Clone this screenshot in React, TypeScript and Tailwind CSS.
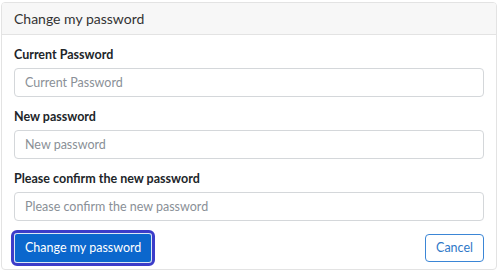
import { useState } from 'react'

function Field({
  id,
  label,
  value,
  onChange,
}: {
  id: string
  label: string
  value: string
  onChange: (v: string) => void
}) {
  return (
    <div className="flex flex-col">
      <label htmlFor={id} className="text-[12.5px] font-bold leading-[16px] text-[#212529]">
        {label}
      </label>
      <input
        id={id}
        type="password"
        placeholder={label}
        value={value}
        onChange={(e) => onChange(e.target.value)}
        className="mt-[5px] h-[29px] w-full rounded-[4px] border border-[#d4d7da] bg-white px-[10px] text-[12.5px] text-[#495057] outline-none placeholder:text-[#8a9097]"
      />
    </div>
  )
}

export default function App() {
  const [current, setCurrent] = useState('')
  const [next, setNext] = useState('')
  const [confirm, setConfirm] = useState('')

  return (
    <div className="h-[273px] w-[500px] bg-white pl-[1px] pr-[3px] pt-[2px] font-['Lato',sans-serif]">
      <div className="overflow-hidden rounded-[4px] border border-[#e3e3e3]">
        <div className="flex h-[32px] items-center border-b border-[#e3e3e3] bg-[#f7f7f7] px-[12px] text-[14px] text-[#333]">
          Change my password
        </div>
        <form
          className="flex flex-col gap-[12px] px-[12px] pb-[6px] pt-[12px]"
          onSubmit={(e) => e.preventDefault()}
        >
          <Field id="current" label="Current Password" value={current} onChange={setCurrent} />
          <Field id="new" label="New password" value={next} onChange={setNext} />
          <Field
            id="confirm"
            label="Please confirm the new password"
            value={confirm}
            onChange={setConfirm}
          />
          <div className="flex items-center justify-between">
            <button
              type="submit"
              className="h-[30px] rounded-[3px] border border-[#dbe7f5] bg-[#0b67cd] px-[10px] text-[12.5px] text-white outline-[3px] outline-[#3c3cc9] outline-solid"
            >
              Change my password
            </button>
            <button
              type="button"
              className="h-[28px] rounded-[4px] border border-[#3b86d6] bg-white px-[10px] text-[12.5px] text-[#2f78c8]"
            >
              Cancel
            </button>
          </div>
        </form>
      </div>
    </div>
  )
}
